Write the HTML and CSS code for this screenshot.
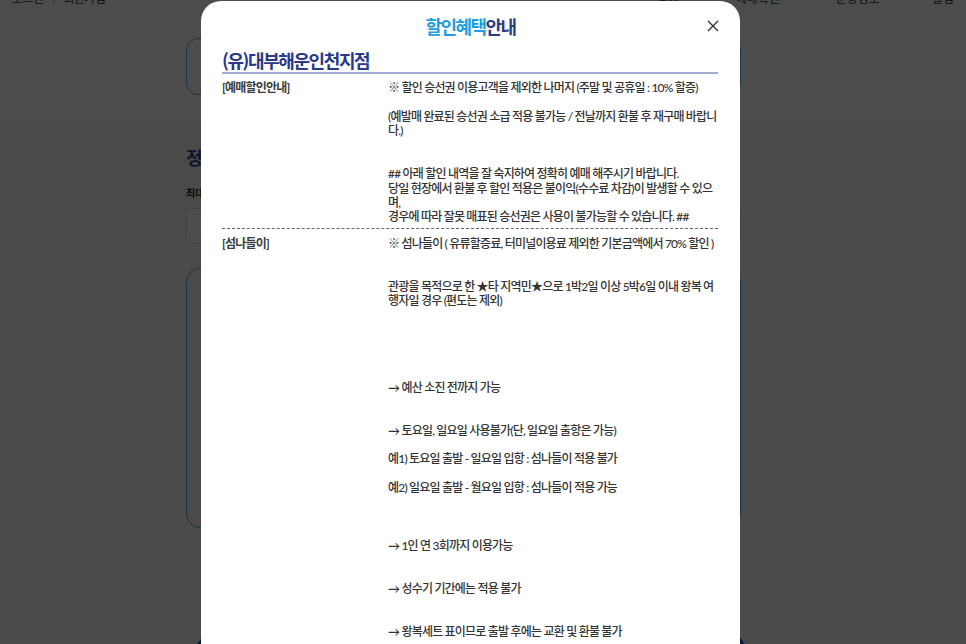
FILE: index.html
```html
<!DOCTYPE html>
<html lang="ko">
<head>
<meta charset="utf-8">
<title>할인혜택안내</title>
<link rel="stylesheet" href="styles.css">
</head>
<body>
<div class="page">
  <header class="top">
    <div class="topbar">
      <div class="util">로그인 <span class="sep">|</span> 회원가입</div>
      <nav class="gnb">
        <span class="gnb-a">공지</span>
        <span class="gnb-b">예매확인</span>
        <span class="gnb-c">운항정보</span>
        <span class="gnb-d">알림</span>
      </nav>
    </div>
    <div class="searchbox"></div>
  </header>
  <main class="body">
    <h2 class="sec-title">정보 입력</h2>
    <div class="sec-label">최대 인원</div>
    <div class="inputbox"></div>
    <div class="bigbox"></div>
    <div class="bottom-btn"></div>
  </main>
</div>

<div class="modal">
  <div class="modal-head">
    <h1 class="modal-title"><span class="hl">할인혜택</span>안내</h1>
    <span class="close" aria-label="닫기">
      <svg width="12" height="12" viewBox="0 0 12 12"><path d="M1 1L11 11M11 1L1 11" stroke="#333" stroke-width="1.4" fill="none"/></svg>
    </span>
  </div>
  <div class="modal-body">
    <h2 class="company">(유)대부해운인천지점</h2>
    <div class="row row-first">
      <div class="label">[예매할인안내]</div>
      <div class="content">※ 할인 승선권 이용고객을 제외한 나머지 (주말 및 공휴일 : 10% 할증)<br><br>(예발매 완료된 승선권 소급 적용 불가능 / 전날까지 환불 후 재구매 바랍니다.)<br><br><br>## 아래 할인 내역을 잘 숙지하여 정확히 예매 해주시기 바랍니다.<br>당일 현장에서 환불 후 할인 적용은 불이익(수수료 차감)이 발생할 수 있으며,<br>경우에 따라 잘못 매표된 승선권은 사용이 불가능할 수 있습니다. ##</div>
    </div>
    <div class="row row-second">
      <div class="label">[섬나들이]</div>
      <div class="content">※ 섬나들이 ( 유류할증료, 터미널이용료 제외한 기본금액에서 70% 할인 )<br><br><br>관광을 목적으로 한 ★타 지역민★으로 1박2일 이상 5박6일 이내 왕복 여행자일 경우 (편도는 제외)<br><br><br><br><br><br>→ 예산 소진 전까지 가능<br><br><br>→ 토요일, 일요일 사용불가(단, 일요일 출항은 가능)<br><br>예1) 토요일 출발 - 일요일 입항 : 섬나들이 적용 불가<br><br>예2) 일요일 출발 - 월요일 입항 : 섬나들이 적용 가능<br><br><br><br>→ 1인 연 3회까지 이용가능<br><br><br>→ 성수기 기간에는 적용 불가<br><br><br>→ 왕복세트 표이므로 출발 후에는 교환 및 환불 불가</div>
    </div>
  </div>
</div>
</body>
</html>
```
FILE: styles.css
```css
* { box-sizing: border-box; }
html, body { margin: 0; padding: 0; }
body {
  width: 966px;
  height: 644px;
  overflow: hidden;
  position: relative;
  background: #f7f7f7;
  font-family: "Lato", "Noto Sans CJK KR", sans-serif;
}
.page { width: 966px; }
.top {
  height: 122px;
  background: #ffffff;
  padding: 1px 0 0 186px;
}
.topbar {
  height: 12px;
  margin-top: -8px;
  margin-left: -174px;
  display: flex;
  justify-content: space-between;
  font-size: 12px;
  line-height: 12px;
  color: #333;
}
.util { letter-spacing: -0.5px; }
.sep { color: #999; padding: 0 6px; }
.gnb { display: flex; padding-right: 12px; }
.gnb-a { margin-right: 56px; }
.gnb-b { margin-right: 56px; }
.gnb-c { margin-right: 52px; }
.searchbox {
  margin-top: 33px;
  width: 555px;
  height: 57px;
  border: 1.5px solid #4fb6e0;
  border-radius: 12px;
}
.body { padding: 24px 0 0 186px; }
.sec-title {
  margin: 0;
  font-size: 18px;
  line-height: 24px;
  font-weight: 700;
  color: #34489a;
}
.sec-label {
  margin-top: 17px;
  font-size: 10px;
  line-height: 12px;
  font-weight: 700;
  color: #222;
}
.inputbox {
  margin-top: 9px;
  width: 555px;
  height: 36px;
  border: 1px solid #dcdcdc;
  border-radius: 7px;
  background: #fff;
}
.bigbox {
  margin-top: 24px;
  width: 555px;
  height: 260px;
  border: 1.5px solid #4fb6e0;
  border-radius: 14px;
}
.bottom-btn {
  margin: 104px 0 0 9px;
  width: 552px;
  height: 50px;
  background: #2b4dbb;
  border-radius: 22px;
}

/* modal with dimmed backdrop drawn as its shadow */
.modal {
  position: absolute;
  left: 201px;
  top: 1px;
  width: 539px;
  height: 700px;
  background: #fff;
  border-radius: 20px 20px 0 0;
  box-shadow: 0 0 0 1200px rgba(0, 0, 0, 0.7);
}
.modal-head {
  height: 50px;
  position: relative;
  display: flex;
  align-items: center;
  justify-content: center;
}
.modal-title {
  margin: 0;
  font-family: "Noto Sans CJK KR", sans-serif;
  font-size: 18px;
  line-height: 50px;
  font-weight: 700;
  letter-spacing: -1.6px;
  color: #2b3a86;
}
.hl { color: #1c9ee0; }
.close {
  position: absolute;
  right: 21px;
  top: 19px;
  width: 12px;
  height: 12px;
  display: block;
}
.close svg { display: block; }
.modal-body { padding: 0 22px 0 21px; }
.company {
  margin: -2px 0 0;
  padding-bottom: 1px;
  font-family: "Noto Sans CJK KR", sans-serif;
  font-size: 18px;
  line-height: 22px;
  font-weight: 700;
  letter-spacing: -1.4px;
  color: #2a3a8a;
  border-bottom: 2px solid #a2acd0;
}
.row {
  display: grid;
  grid-template-columns: 166px 1fr;
  font-size: 12px;
  line-height: 14.37px;
  letter-spacing: -0.8px;
  color: #333;
  font-weight: 500;
}
.row-first {
  padding: 7px 0 3px;
  border-bottom: 1px dashed #666;
}
.row-second { padding: 8px 0 5px; }
.label { font-weight: 700; color: #3a3a3a; }
.content { word-break: normal; }
```
